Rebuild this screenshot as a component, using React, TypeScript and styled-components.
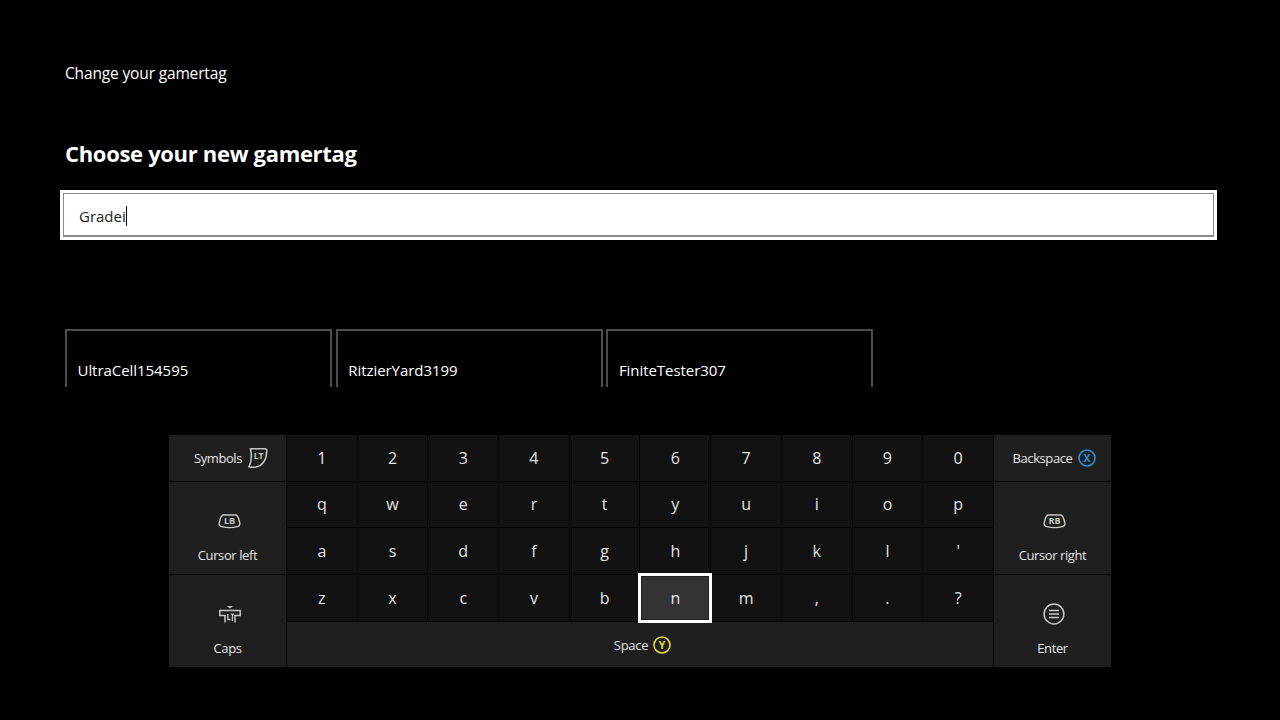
import React from "react";
import styled, { createGlobalStyle } from "styled-components";

const GlobalStyle = createGlobalStyle`
  html, body {
    margin: 0;
    padding: 0;
    background: #000;
    color: #fff;
    font-family: "Open Sans", "Noto Sans", sans-serif;
  }
`;

const Page = styled.div`
  width: 1280px;
  height: 720px;
  overflow: hidden;
  background: #000;
  display: flex;
  flex-direction: column;
`;

const Crumb = styled.div`
  margin: 63px 0 0 65px;
  height: 20px;
  font-size: 15.5px;
  line-height: 20px;
  letter-spacing: -0.15px;
  color: #fff;
`;

const Title = styled.h1`
  margin: 54px 0 0 65px;
  height: 32px;
  font-size: 22px;
  line-height: 32px;
  font-weight: 700;
  letter-spacing: -0.32px;
  color: #fff;
`;

const InputFrame = styled.div`
  box-sizing: border-box;
  margin: 21px 0 0 60px;
  width: 1157px;
  height: 50px;
  background: #fff;
  padding: 3px;
`;

const InputBox = styled.div`
  box-sizing: border-box;
  height: 100%;
  border: 1px solid #8a8a8a;
  border-bottom-width: 2px;
  padding: 2px 15px 0;
  display: flex;
  align-items: center;
  font-size: 15px;
  color: #222;
`;

const Caret = styled.span`
  display: inline-block;
  width: 1px;
  height: 20px;
  background: #000;
`;

const Suggestions = styled.div`
  display: flex;
  gap: 3.7px;
  margin: 89px 0 0 65px;
`;

const Suggestion = styled.div`
  box-sizing: border-box;
  width: 267px;
  height: 58px;
  border: 2px solid #4c4c4c;
  border-bottom: none;
  padding: 29px 0 0 10.5px;
  font-size: 15px;
  line-height: 20px;
  letter-spacing: -0.05px;
  color: #fff;
`;

const Keyboard = styled.div`
  display: grid;
  grid-template-columns: 117px repeat(10, 1fr) 117px;
  grid-template-rows: 46px 45px 46px 46px 45px;
  gap: 1px;
  width: 942px;
  height: 232px;
  margin: 48px 0 0 169px;
  background: #000;
`;

const Key = styled.div<{ $focused?: boolean }>`
  position: relative;
  display: flex;
  align-items: center;
  justify-content: center;
  padding-bottom: 1px;
  box-sizing: border-box;
  background: ${(p) => (p.$focused ? "#333" : "#121212")};
  font-size: 16px;
  color: #e4e4e4;
  ${(p) =>
    p.$focused &&
    `
    z-index: 1;
    box-shadow: inset 0 0 0 2px #222;
    outline: 3px solid #fff;
    outline-offset: -1px;
    color: #e8e8e8;
  `}
`;

const SideKey = styled.div<{ $col: number; $row: string; $shift?: number }>`
  box-sizing: border-box;
  grid-column: ${(p) => p.$col};
  grid-row: ${(p) => p.$row};
  background: #1f1f1f;
  display: flex;
  align-items: center;
  justify-content: center;
  gap: 6px;
  padding-left: ${(p) => p.$shift ?? 0}px;
  font-size: 13px;
  letter-spacing: -0.4px;
  color: #e4e4e4;
`;

const TallKey = styled.div<{ $col: number; $row: string }>`
  box-sizing: border-box;
  grid-column: ${(p) => p.$col};
  grid-row: ${(p) => p.$row};
  background: #1f1f1f;
  display: flex;
  flex-direction: column;
  align-items: center;
  padding-top: 27px;
  font-size: 13px;
  line-height: 18px;
  letter-spacing: -0.4px;
  color: #e4e4e4;
`;

const IconSlot = styled.div`
  height: 24px;
  margin: 0 0 13px 4px;
  display: flex;
  align-items: center;
  justify-content: center;
`;

const SpaceKey = styled.div`
  box-sizing: border-box;
  grid-column: 2 / 12;
  grid-row: 5;
  background: #1f1f1f;
  display: flex;
  align-items: center;
  justify-content: center;
  gap: 5px;
  padding-left: 5px;
  font-size: 13px;
  letter-spacing: -0.3px;
  color: #e4e4e4;
`;

const IconLabel = styled.text`
  font-family: "Open Sans", sans-serif;
  font-weight: 700;
  letter-spacing: 0;
`;

const LtIcon = () => (
  <svg width="20" height="22" viewBox="0 0 20 22" fill="none">
    <path d="M2.5 1.8 H17 Q19 1.8 18.8 4 C18.5 12 15 18.5 8 20 Q3.5 20.8 1 19.8 C3.5 15 3.8 8 2.5 1.8 Z" stroke="#c8c8c8" strokeWidth="1.5" />
    <IconLabel x="10.5" y="11.8" fontSize="8.5" textAnchor="middle" fill="#c8c8c8">LT</IconLabel>
  </svg>
);

const BumperIcon = ({ label }: { label: string }) => (
  <svg width="23" height="15" viewBox="0 0 23 15" fill="none">
    <path d="M5 1 H18 Q20.5 2 21.8 9 Q22.2 12 19.5 12.6 C15 13.8 8 13.8 3.5 12.6 Q0.8 12 1.2 9 Q2.5 2 5 1 Z" stroke="#c8c8c8" strokeWidth="1.4" />
    <IconLabel x="11.5" y="10.3" fontSize="9" textAnchor="middle" fill="#c8c8c8">{label}</IconLabel>
  </svg>
);

const CapsIcon = () => (
  <svg width="22" height="17" viewBox="0 0 22 17" fill="none" stroke="#c8c8c8" strokeWidth="1.5">
    <path d="M8 0 L14 0 L11 2.4 Z" fill="#c8c8c8" stroke="none" />
    <path d="M6 16.5 V9.5 H0.8 V4.5 H21.2 V9.5 H16 V16.5" />
    <path d="M8.8 8 V13.5 H11.5 M11.8 8.2 H15 M13.4 8.2 V15" strokeWidth="1.3" />
  </svg>
);

const RoundIcon = ({ color, label }: { color: string; label: string }) => (
  <svg width="18" height="18" viewBox="0 0 18 18" fill="none">
    <circle cx="9" cy="9" r="8" stroke={color} strokeWidth="1.6" />
    <IconLabel x="9" y="12.8" fontSize="10.5" textAnchor="middle" fill={color}>{label}</IconLabel>
  </svg>
);

const MenuIcon = () => (
  <svg width="22" height="22" viewBox="0 0 22 22" fill="none" stroke="#c8c8c8">
    <circle cx="11" cy="11" r="9.9" strokeWidth="1.5" />
    <path d="M6 7.5 H16 M6 11 H16 M6 14.5 H16" strokeWidth="1.7" />
  </svg>
);

const numbers = "1234567890".split("");
const rows = ["qwertyuiop", "asdfghjkl'", "zxcvbnm,.?"].map((r) => r.split(""));
const suggestions = ["UltraCell154595", "RitzierYard3199", "FiniteTester307"];

export default function App() {
  return (
    <Page>
      <GlobalStyle />
      <Crumb>Change your gamertag</Crumb>
      <Title>Choose your new gamertag</Title>
      <InputFrame>
        <InputBox>
          Gradei
          <Caret />
        </InputBox>
      </InputFrame>
      <Suggestions>
        {suggestions.map((s) => (
          <Suggestion key={s}>{s}</Suggestion>
        ))}
      </Suggestions>
      <Keyboard>
        <SideKey $col={1} $row="1" $shift={7}>
          Symbols <LtIcon />
        </SideKey>
        {numbers.map((n) => (
          <Key key={n}>{n}</Key>
        ))}
        <SideKey $col={12} $row="1" $shift={4}>
          Backspace <RoundIcon color="#2f8fd6" label="X" />
        </SideKey>

        <TallKey $col={1} $row="2 / 4">
          <IconSlot>
            <BumperIcon label="LB" />
          </IconSlot>
          Cursor left
        </TallKey>
        {rows[0].map((k) => (
          <Key key={k}>{k}</Key>
        ))}
        <TallKey $col={12} $row="2 / 4">
          <IconSlot>
            <BumperIcon label="RB" />
          </IconSlot>
          Cursor right
        </TallKey>
        {rows[1].map((k) => (
          <Key key={k}>{k}</Key>
        ))}

        <TallKey $col={1} $row="4 / 6">
          <IconSlot>
            <CapsIcon />
          </IconSlot>
          Caps
        </TallKey>
        {rows[2].map((k) => (
          <Key key={k} $focused={k === "n"}>
            {k}
          </Key>
        ))}
        <TallKey $col={12} $row="4 / 6">
          <IconSlot>
            <MenuIcon />
          </IconSlot>
          Enter
        </TallKey>

        <SpaceKey>
          Space <RoundIcon color="#e6d84a" label="Y" />
        </SpaceKey>
      </Keyboard>
    </Page>
  );
}
